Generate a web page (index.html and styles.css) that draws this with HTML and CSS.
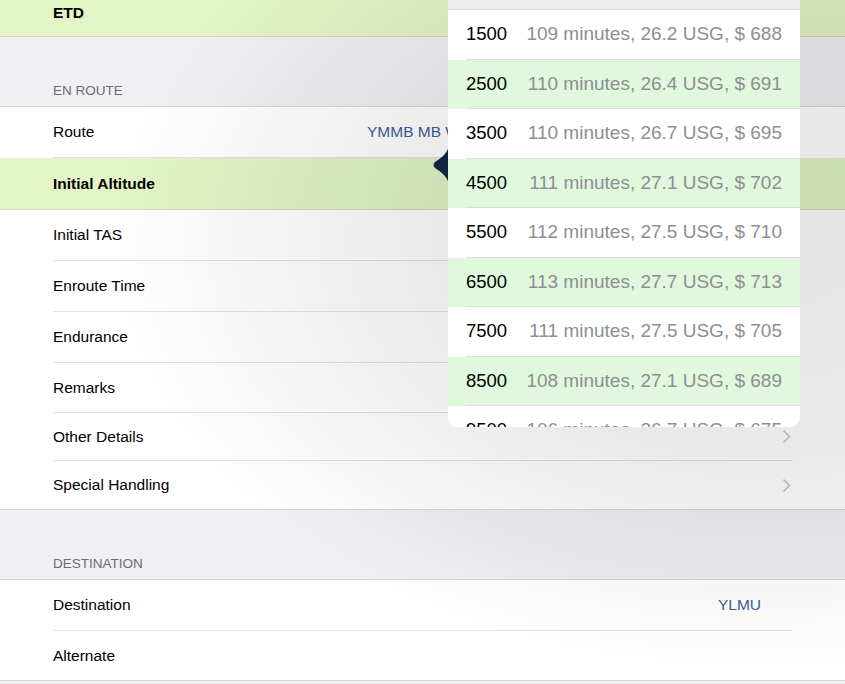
FILE: index.html
```html
<!DOCTYPE html>
<html lang="en">

<head>
    <meta charset="UTF-8">
    <title>Flight Plan - En Route</title>
    <link rel="stylesheet" href="styles.css">
</head>

<body>
    <div class="screen">
        <div class="table">
            <div class="row selected etd">
                <div class="cell last"><span class="label">ETD</span></div>
            </div>

            <div class="section-header">En Route</div>
            <div class="group">
                <div class="row">
                    <div class="cell"><span class="label">Route</span><span class="value route-value">YMMB MB WOL V279 NIMBY H65 CB YLMU</span></div>
                </div>
                <div class="row selected">
                    <div class="cell"><span class="label">Initial Altitude</span></div>
                </div>
                <div class="row">
                    <div class="cell"><span class="label">Initial TAS</span></div>
                </div>
                <div class="row">
                    <div class="cell"><span class="label">Enroute Time</span></div>
                </div>
                <div class="row">
                    <div class="cell"><span class="label">Endurance</span></div>
                </div>
                <div class="row short-top">
                    <div class="cell"><span class="label">Remarks</span></div>
                </div>
                <div class="row short">
                    <div class="cell"><span class="label">Other Details</span>
                        <svg class="chevron" width="9" height="15" viewBox="0 0 9 15"><path d="M1.5 1.5 L7.5 7.5 L1.5 13.5" /></svg>
                    </div>
                </div>
                <div class="row short">
                    <div class="cell last"><span class="label">Special Handling</span>
                        <svg class="chevron" width="9" height="15" viewBox="0 0 9 15"><path d="M1.5 1.5 L7.5 7.5 L1.5 13.5" /></svg>
                    </div>
                </div>
            </div>

            <div class="section-header">Destination</div>
            <div class="group">
                <div class="row">
                    <div class="cell"><span class="label">Destination</span><span class="value">YLMU</span></div>
                </div>
                <div class="row alt">
                    <div class="cell last"><span class="label">Alternate</span></div>
                </div>
            </div>
        </div>

        <svg class="popover-arrow" width="17" height="38" viewBox="0 0 17 38">
            <path d="M17 0 C15 8 9 12 3 16 Q0 19 3 22 C9 26 15 30 17 38 Z" />
        </svg>

        <div class="popover">
            <div class="popover-head"></div>
            <div class="alt-list" id="altList"></div>
        </div>
    </div>

    <script>
        const altitudes = [
            [1500, 109, '26.2', 688],
            [2500, 110, '26.4', 691],
            [3500, 110, '26.7', 695],
            [4500, 111, '27.1', 702],
            [5500, 112, '27.5', 710],
            [6500, 113, '27.7', 713],
            [7500, 111, '27.5', 705],
            [8500, 108, '27.1', 689],
            [9500, 106, '26.7', 675]
        ]
        const list = document.getElementById('altList')

        altitudes.forEach(function (a, i) {
            const row = document.createElement('div')
            row.className = i % 2 ? 'alt-row even' : 'alt-row'
            row.innerHTML = `<div class="alt-cell"><span class="alt">${a[0]}</span>` +
                `<span class="detail">${a[1]} minutes, ${a[2]} USG, $ ${a[3]}</span></div>`
            list.appendChild(row)
        })
    </script>
</body>

</html>
```

FILE: styles.css
```css
body {
    margin: 0;
    background: #efeff4;
    font-family: "Liberation Sans", Arial, sans-serif;
}

.screen {
    position: relative;
    width: 845px;
    height: 684px;
    overflow: hidden;
}

/* dimming behind the popover */
.screen::after {
    content: '';
    position: absolute;
    inset: 0;
    background: radial-gradient(ellipse 660px 430px at 770px 240px, rgba(0, 0, 0, 0.1) 0%, rgba(0, 0, 0, 0.085) 50%, rgba(0, 0, 0, 0.035) 82%, transparent 100%);
    pointer-events: none;
    z-index: 1;
}

.table {
    margin-top: -10px;
}

.group {
    background: #fff;
    border-top: 1px solid #d6d6da;
    border-bottom: 1px solid #d6d6da;
}

.row {
    height: 51px;
    padding-left: 53px;
    display: flex;
    background: #fff;
}

.row.etd {
    height: 46px;
}

.row.short-top {
    height: 50px;
}

.row.short {
    height: 48px;
}

.row.alt {
    height: 49px;
}

.row.selected {
    background: #e3f4c6;
    border-bottom: 1px solid #cfd8bd;
}

.cell {
    flex: 1;
    margin-right: 53px;
    display: flex;
    align-items: center;
    border-bottom: 1px solid #e2e2e4;
}

.row.selected .cell,
.cell.last {
    border-bottom: none;
}

.label {
    font-size: 15.5px;
    color: #000;
}

.row.selected .label {
    font-weight: bold;
}

.value {
    margin-left: auto;
    margin-right: 31px;
    font-size: 15.5px;
    color: #3b5f98;
}

.route-value {
    width: 394px;
    white-space: nowrap;
    overflow: hidden;
}

.chevron {
    margin-left: auto;
    margin-right: 1px;
    fill: none;
    stroke: #c4c4c9;
    stroke-width: 1.6;
}

.section-header {
    height: 69px;
    box-sizing: border-box;
    padding: 0 0 8px 53px;
    display: flex;
    align-items: flex-end;
    font-size: 13.5px;
    color: #6d6d72;
    text-transform: uppercase;
}

/* altitude popover */
.popover {
    position: absolute;
    left: 448px;
    top: 0;
    width: 352px;
    height: 427px;
    background: #fff;
    border-radius: 0 0 11px 11px;
    overflow: hidden;
    z-index: 2;
}

.popover-arrow {
    position: absolute;
    left: 432px;
    top: 146px;
    fill: #10253f;
    z-index: 2;
}

.popover-head {
    height: 9px;
    background: #ebebf0;
    border-bottom: 1px solid #dcdce0;
}

.alt-row {
    height: 49.5px;
    padding-left: 18px;
    display: flex;
    background: #fff;
}

.alt-row.even {
    background: #e0f8dc;
}

.alt-cell {
    flex: 1;
    display: flex;
    align-items: center;
    padding-right: 18px;
    border-bottom: 1px solid #dedee2;
}

.alt {
    font-size: 18.5px;
    color: #000;
}

.detail {
    margin-left: auto;
    font-size: 19px;
    color: #8e8e93;
}
```
